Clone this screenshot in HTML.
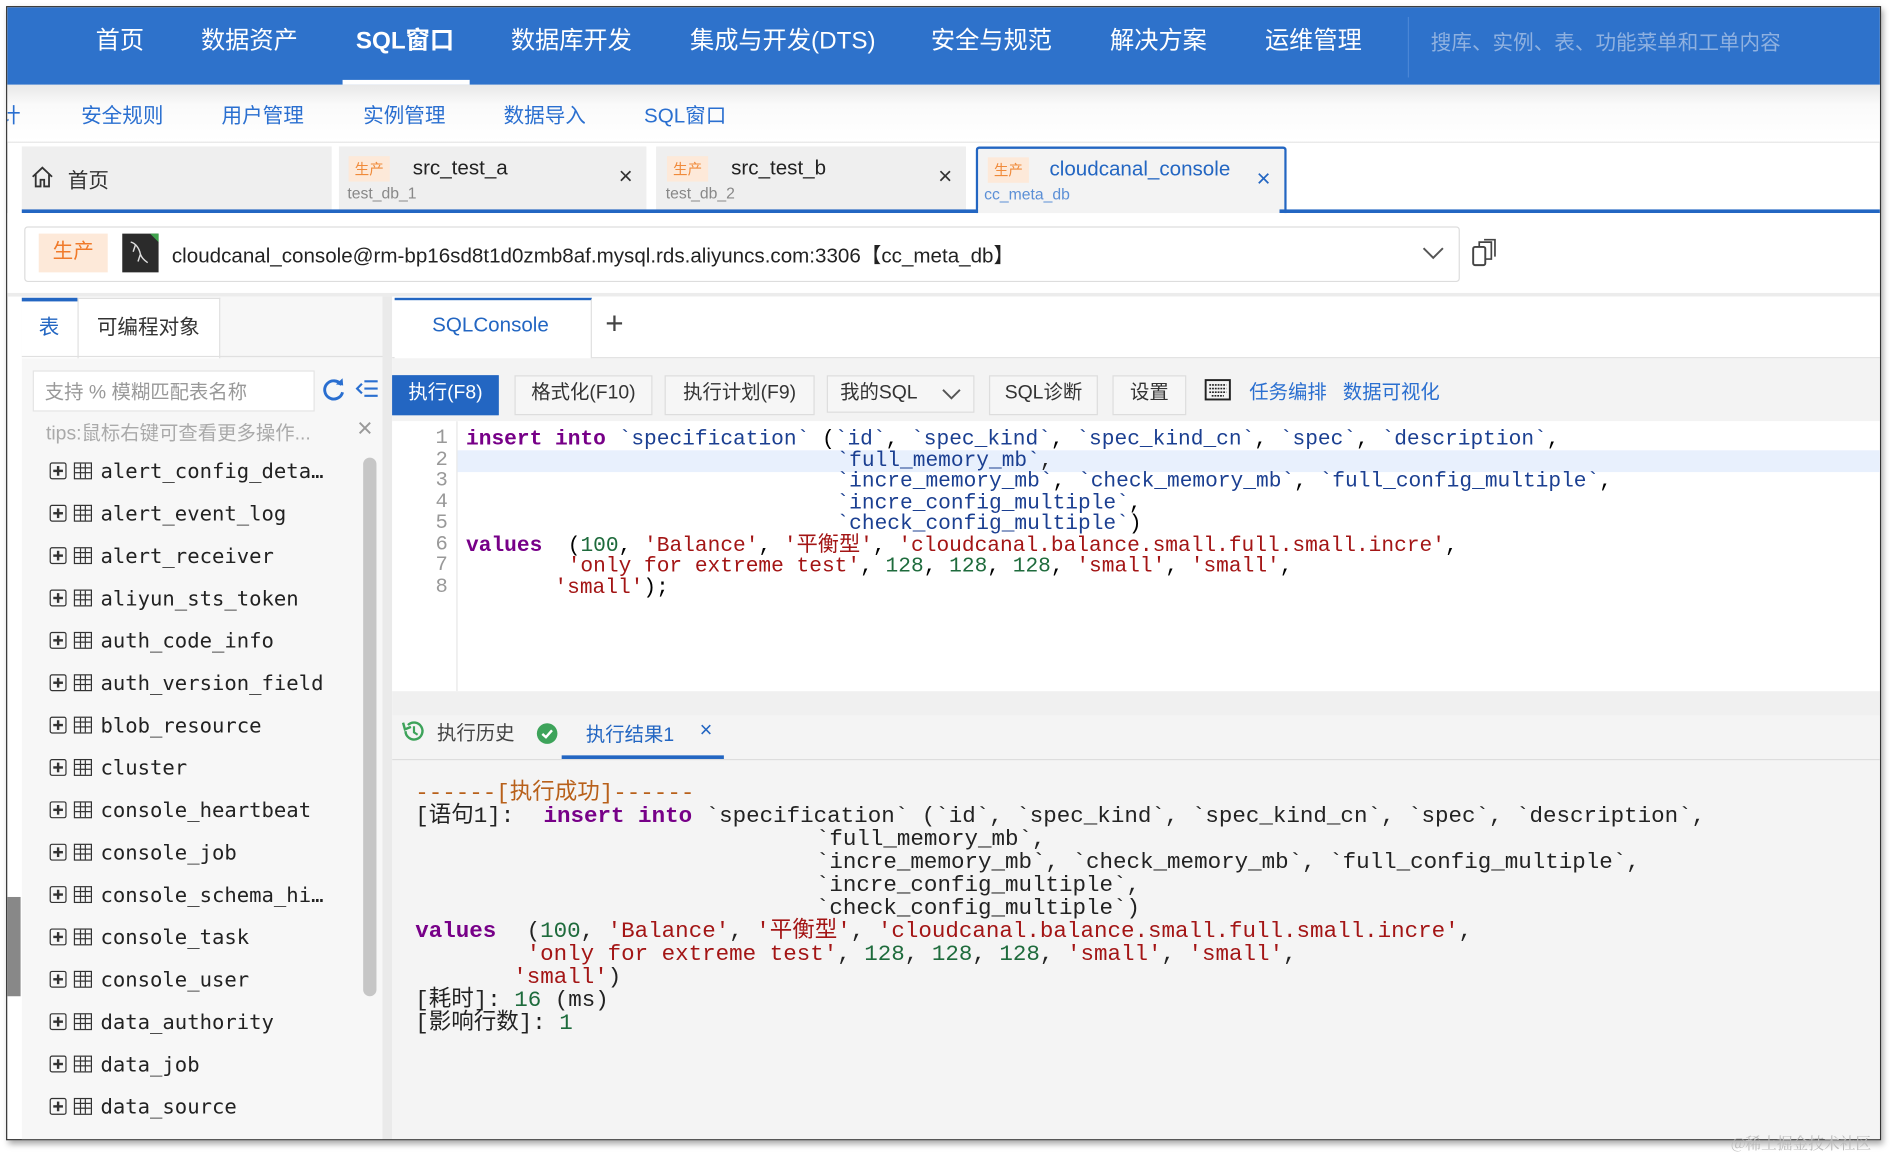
<!DOCTYPE html>
<html><head><meta charset="utf-8">
<style>
html,body{margin:0;padding:0;background:#fff;overflow:hidden;width:1898px;height:1158px}
#s{position:absolute;left:0;top:0;width:1568px;height:957px;transform:scale(1.2105);transform-origin:0 0;font-family:"Liberation Sans","Noto Sans CJK SC",sans-serif;}
.a{position:absolute;white-space:nowrap}
#app{position:absolute;left:5px;top:5px;width:1547px;height:935px;background:#fff;border:1.5px solid #333;box-shadow:2px 3px 5px rgba(0,0,0,.35);overflow:hidden}
.nav{color:#fff;font-size:20px}
.sub{color:#2a6fd0;font-size:17px}
.tab{position:absolute;top:120px;height:53px;background:#efefef}
.tag{position:absolute;background:#fde9d9;color:#f08a3a;font-size:12px;padding:2px 5px}
.code{font-family:"Liberation Mono","DejaVu Sans Mono","Noto Sans CJK SC",monospace}
.k{color:#770088;font-weight:bold}.b{color:#1b3f91}.st{color:#a31515}.n{color:#1e6b3c}
.btn{position:absolute;top:304px;height:31px;border:1px solid #ddd;background:#f6f6f6;font-size:16px;color:#333;text-align:center;line-height:27px}
.tr{position:absolute;left:35px;font-family:"DejaVu Sans Mono","Liberation Mono",monospace;font-size:17px;color:#222;height:20px;line-height:20px}
.pb{display:inline-block;width:12px;height:12px;border:1.3px solid #333;border-radius:2px;position:relative;vertical-align:-1px;margin-right:6px}
.pb:before{content:"";position:absolute;left:2px;top:5.3px;width:8px;height:1.4px;background:#333}
.pb:after{content:"";position:absolute;left:5.3px;top:2px;width:1.4px;height:8px;background:#333}
.tb{display:inline-block;width:13px;height:12px;border:1.3px solid #333;vertical-align:-1px;margin-right:7px;background:linear-gradient(#333,#333) 0 3px/100% 1.2px no-repeat,linear-gradient(#333,#333) 0 7px/100% 1.2px no-repeat,linear-gradient(#333,#333) 4px 0/1.2px 100% no-repeat,linear-gradient(#333,#333) 8px 0/1.2px 100% no-repeat}
.ln{position:absolute;left:330px;width:34px;text-align:right;color:#999;font-family:"Liberation Mono",monospace;font-size:17px}
.el{position:absolute;font-size:17.5px;line-height:18px}
.rl{position:absolute;font-size:18.6px;line-height:19px;color:#222}
</style></head><body>
<div id="s">
<div id="app">
 <div class="a" style="left:0;top:0;width:1547px;height:64px;background:#2e72cb"></div>
 <div class="a" style="left:1157px;top:8px;width:1px;height:50px;background:#4a86d6"></div>
 <div class="a nav" style="left:73px;top:11px">首页</div>
 <div class="a nav" style="left:160px;top:11px">数据资产</div>
 <div class="a nav" style="left:288px;top:11px;font-weight:bold">SQL窗口</div>
 <div class="a" style="left:277px;top:60px;width:105px;height:4px;background:#fff"></div>
 <div class="a nav" style="left:416px;top:11px">数据库开发</div>
 <div class="a nav" style="left:564px;top:11px">集成与开发(DTS)</div>
 <div class="a nav" style="left:763px;top:11px">安全与规范</div>
 <div class="a nav" style="left:911px;top:11px">解决方案</div>
 <div class="a nav" style="left:1039px;top:11px">运维管理</div>
 <div class="a" style="left:1176px;top:15px;font-size:17px;color:#8fb1e0">搜库、实例、表、功能菜单和工单内容</div>
 <div class="a" style="left:0;top:64px;width:1547px;height:47px;background:linear-gradient(#e8e8e8,#fafafa 35%,#fff)"></div>
 <div class="a" style="left:0;top:111px;width:1547px;height:1px;background:#e6e6e6"></div>
 <div class="a sub" style="left:-6px;top:75px">计</div>
 <div class="a sub" style="left:61px;top:75px">安全规则</div>
 <div class="a sub" style="left:177px;top:75px">用户管理</div>
 <div class="a sub" style="left:294px;top:75px">实例管理</div>
 <div class="a sub" style="left:410px;top:75px">数据导入</div>
 <div class="a sub" style="left:526px;top:75px">SQL窗口</div>
 <div class="tab" style="left:12px;top:115px;width:256px"></div>
 <svg class="a" style="left:19px;top:130px" width="20" height="20" viewBox="0 0 20 20"><path d="M2 10 L10 2.5 L18 10 M4.5 8 V18 H8.5 V12.5 H11.5 V18 H15.5 V8" fill="none" stroke="#333" stroke-width="1.5"/></svg>
 <div class="a" style="left:50px;top:129px;font-size:17px;color:#333">首页</div>
 <div class="tab" style="left:274px;top:115px;width:254px"></div>
 <div class="tag" style="left:282px;top:123px">生产</div>
 <div class="a" style="left:335px;top:123px;font-size:17px;color:#222">src_test_a</div>
 <div class="a" style="left:281px;top:146px;font-size:13px;color:#888">test_db_1</div>
 <div class="a" style="left:505px;top:129px;font-size:20px;color:#333">×</div>
 <div class="tab" style="left:536px;top:115px;width:256px"></div>
 <div class="tag" style="left:545px;top:123px">生产</div>
 <div class="a" style="left:598px;top:123px;font-size:17px;color:#222">src_test_b</div>
 <div class="a" style="left:544px;top:146px;font-size:13px;color:#888">test_db_2</div>
 <div class="a" style="left:769px;top:129px;font-size:20px;color:#333">×</div>
 <div class="a" style="left:800px;top:115px;width:253px;height:55px;background:#f3f3f3;border:2px solid #2366c2;border-bottom:none;border-radius:3px 3px 0 0"></div>
 <div class="tag" style="left:810px;top:124px">生产</div>
 <div class="a" style="left:861px;top:124px;font-size:17px;color:#2366c2">cloudcanal_console</div>
 <div class="a" style="left:807px;top:147px;font-size:13px;color:#5b8fd6">cc_meta_db</div>
 <div class="a" style="left:1032px;top:131px;font-size:20px;color:#2366c2">×</div>
 <div class="a" style="left:12px;top:167px;width:1535px;height:3px;background:#2366c2"></div>
 <div class="a" style="left:802px;top:166px;width:249px;height:5px;background:#f3f3f3"></div>
 <div class="a" style="left:0;top:170px;width:1547px;height:66px;background:#fff"></div>
 <div class="a" style="left:14px;top:181px;width:1184px;height:44px;border:1px solid #ddd;border-radius:3px;background:#fff"></div>
 <div class="a" style="left:26px;top:187px;width:57px;height:32px;background:#fde9d9;color:#f07a2a;font-size:17px;text-align:center;line-height:30px">生产</div>
 <div class="a" style="left:95px;top:187px;width:30px;height:32px;background:#2b2b2b"></div>
 <div class="a" style="left:118px;top:187px;width:0;height:0;border-top:7px solid #3fa34d;border-left:7px solid transparent"></div>
 <svg class="a" style="left:98px;top:190px" width="24" height="26" viewBox="0 0 24 26"><path d="M4 4 C8 5 11 9 12 14 C13 17 15 19 18 21 M8 6 L6 12 M12 14 L10 20" fill="none" stroke="#ddd" stroke-width="1.2"/></svg>
 <div class="a" style="left:136px;top:191px;font-size:17px;color:#222">cloudcanal_console@rm-bp16sd8t1d0zmb8af.mysql.rds.aliyuncs.com:3306【cc_meta_db】</div>
 <svg class="a" style="left:1168px;top:196px" width="20" height="14" viewBox="0 0 20 14"><path d="M2 3 L10 11 L18 3" fill="none" stroke="#555" stroke-width="1.6"/></svg>
 <svg class="a" style="left:1208px;top:189px" width="26" height="26" viewBox="0 0 26 26"><rect x="3" y="9" width="10" height="15" rx="1.5" fill="none" stroke="#444" stroke-width="1.6"/><path d="M8 9 V5 H18 V19 H13 M12 3 H21 V17" fill="none" stroke="#444" stroke-width="1.4"/></svg>
 <div class="a" style="left:0;top:236px;width:1547px;height:3px;background:#ececec"></div>
 <div class="a" style="left:12px;top:239px;width:298px;height:700px;background:#f7f7f7"></div>
 <div class="a" style="left:310px;top:239px;width:8px;height:700px;background:#eaeaea"></div>
 <div class="a" style="left:12px;top:240px;width:46px;height:47px;background:#fff;border-top:3px solid #2366c2"></div>
 <div class="a" style="left:26px;top:250px;font-size:17px;color:#2366c2">表</div>
 <div class="a" style="left:58px;top:240px;width:116px;height:49px;background:#fff;border:1px solid #e0e0e0;border-bottom:none"></div>
 <div class="a" style="left:74px;top:250px;font-size:17px;color:#333">可编程对象</div>
 <div class="a" style="left:12px;top:288px;width:298px;height:1px;background:#e0e0e0"></div>
 <div class="a" style="left:21px;top:300px;width:231px;height:32px;background:#fff;border:1px solid #e4e4e4"></div>
 <div class="a" style="left:31px;top:304px;font-size:16px;color:#999">支持 % 模糊匹配表名称</div>
 <svg class="a" style="left:259px;top:305px" width="22" height="22" viewBox="0 0 22 22"><path d="M17 7 A7.5 7.5 0 1 0 18 13" fill="none" stroke="#2a6fd0" stroke-width="2.4"/><path d="M12.5 6.5 L18.5 7.5 L18 1.5 Z" fill="#2a6fd0"/></svg>
 <svg class="a" style="left:287px;top:306px" width="20" height="18" viewBox="0 0 20 18"><path d="M8 3 H19 M8 9 H19 M8 15 H19 M6 5 L2 9 L6 13" fill="none" stroke="#2a6fd0" stroke-width="1.8"/></svg>
 <div class="a" style="left:32px;top:338px;font-size:16px;color:#aaa">tips:鼠标右键可查看更多操作...</div>
 <div class="a" style="left:289px;top:335px;font-size:22px;color:#999">×</div>
 <div class="a" style="left:294px;top:372px;width:11px;height:445px;background:#c6c6c6;border-radius:6px"></div>
 <div class="a" style="left:0;top:735px;width:11px;height:82px;background:#888"></div>

 <div class="tr" style="top:374px"><span class="pb"></span><span class="tb"></span>alert_config_deta…</div>
 <div class="tr" style="top:409px"><span class="pb"></span><span class="tb"></span>alert_event_log</div>
 <div class="tr" style="top:444px"><span class="pb"></span><span class="tb"></span>alert_receiver</div>
 <div class="tr" style="top:479px"><span class="pb"></span><span class="tb"></span>aliyun_sts_token</div>
 <div class="tr" style="top:514px"><span class="pb"></span><span class="tb"></span>auth_code_info</div>
 <div class="tr" style="top:549px"><span class="pb"></span><span class="tb"></span>auth_version_field</div>
 <div class="tr" style="top:584px"><span class="pb"></span><span class="tb"></span>blob_resource</div>
 <div class="tr" style="top:619px"><span class="pb"></span><span class="tb"></span>cluster</div>
 <div class="tr" style="top:654px"><span class="pb"></span><span class="tb"></span>console_heartbeat</div>
 <div class="tr" style="top:689px"><span class="pb"></span><span class="tb"></span>console_job</div>
 <div class="tr" style="top:724px"><span class="pb"></span><span class="tb"></span>console_schema_hi…</div>
 <div class="tr" style="top:759px"><span class="pb"></span><span class="tb"></span>console_task</div>
 <div class="tr" style="top:794px"><span class="pb"></span><span class="tb"></span>console_user</div>
 <div class="tr" style="top:829px"><span class="pb"></span><span class="tb"></span>data_authority</div>
 <div class="tr" style="top:864px"><span class="pb"></span><span class="tb"></span>data_job</div>
 <div class="tr" style="top:899px"><span class="pb"></span><span class="tb"></span>data_source</div>

 <div class="a" style="left:318px;top:239px;width:1229px;height:50px;background:#fff"></div>
 <div class="a" style="left:318px;top:289px;width:1229px;height:1px;background:#e0e0e0"></div>
 <div class="a" style="left:320px;top:240px;width:162px;height:50px;background:#fff;border-top:2px solid #2366c2;border-right:1px solid #e0e0e0"></div>
 <div class="a" style="left:351px;top:253px;font-size:17px;color:#2366c2">SQLConsole</div>
 <div class="a" style="left:494px;top:246px;font-size:26px;color:#444;font-weight:300">+</div>
 <div class="a" style="left:318px;top:290px;width:1229px;height:52px;background:#f3f3f3"></div>
 <div class="btn" style="left:318px;width:86px;background:#2366c2;border-color:#2366c2;color:#fff">执行(F8)</div>
 <div class="btn" style="left:419px;width:112px">格式化(F10)</div>
 <div class="btn" style="left:543px;width:122px">执行计划(F9)</div>
 <div class="btn" style="left:677px;width:122px;text-align:left;padding-left:10px;box-sizing:border-box">我的SQL<svg style="position:absolute;right:10px;top:9px" width="16" height="12" viewBox="0 0 16 12"><path d="M1 2 L8 9 L15 2" fill="none" stroke="#555" stroke-width="1.6"/></svg></div>
 <div class="btn" style="left:811px;width:88px">SQL诊断</div>
 <div class="btn" style="left:913px;width:59px">设置</div>
 <svg class="a" style="left:989px;top:307px" width="22" height="18" viewBox="0 0 22 18"><rect x="1" y="1" width="20" height="16" fill="none" stroke="#222" stroke-width="1.6"/><path d="M4 5 H18 M4 8 H18 M4 11 H18 M6 14 H16" stroke="#222" stroke-width="1.4" stroke-dasharray="1.5 0.8"/></svg>
 <div class="a" style="left:1026px;top:304px;font-size:16px;color:#2a6fd0">任务编排&nbsp;&nbsp;&nbsp;数据可视化</div>
 <div class="a" style="left:318px;top:342px;width:1229px;height:223px;background:#fff"></div>
 <div class="a" style="left:371px;top:342px;width:1px;height:223px;background:#e6e6e6"></div>
 <div class="a" style="left:372px;top:366px;width:1175px;height:18px;background:#e8f0fd"></div>
 <div class="ln" style="top:348px;line-height:17.5px;white-space:pre">1
2
3
4
5
6
7
8</div>
 <div class="a code el" style="left:379px;top:348px"><span class="k">insert into</span> <span class="b">`specification`</span> (<span class="b">`id`</span>, <span class="b">`spec_kind`</span>, <span class="b">`spec_kind_cn`</span>, <span class="b">`spec`</span>, <span class="b">`description`</span>,</div>
 <div class="a code el b" style="left:685px;top:365.5px">`full_memory_mb`<span style="color:#222">,</span></div>
 <div class="a code el" style="left:685px;top:383px"><span class="b">`incre_memory_mb`</span>, <span class="b">`check_memory_mb`</span>, <span class="b">`full_config_multiple`</span>,</div>
 <div class="a code el" style="left:685px;top:400.5px"><span class="b">`incre_config_multiple`</span>,</div>
 <div class="a code el" style="left:685px;top:418px"><span class="b">`check_config_multiple`</span>)</div>
 <div class="a code el" style="left:379px;top:435.5px"><span class="k">values</span></div>
 <div class="a code el" style="left:463px;top:435.5px">(<span class="n">100</span>, <span class="st">'Balance'</span>, <span class="st">'平衡型'</span>, <span class="st">'cloudcanal.balance.small.full.small.incre'</span>,</div>
 <div class="a code el" style="left:463px;top:453px"><span class="st">'only for extreme test'</span>, <span class="n">128</span>, <span class="n">128</span>, <span class="n">128</span>, <span class="st">'small'</span>, <span class="st">'small'</span>,</div>
 <div class="a code el" style="left:452px;top:470.5px"><span class="st">'small'</span>);</div>
 <div class="a" style="left:318px;top:565px;width:1229px;height:20px;background:#f0f0f0"></div>
 <div class="a" style="left:318px;top:585px;width:1229px;height:355px;background:#f4f4f4"></div>
 <div class="a" style="left:318px;top:621px;width:1229px;height:1px;background:#ddd"></div>
 <svg class="a" style="left:325px;top:588px" width="20" height="20" viewBox="0 0 20 20"><path d="M4 10 A7 7 0 1 0 6 5" fill="none" stroke="#3da35a" stroke-width="2"/><path d="M2 3 L3.5 8.5 L8.5 6.5" fill="none" stroke="#3da35a" stroke-width="2"/><path d="M11 6 V11 L14 13" fill="none" stroke="#3da35a" stroke-width="1.8"/></svg>
 <div class="a" style="left:355px;top:586px;font-size:16px;color:#444">执行历史</div>
 <svg class="a" style="left:437px;top:591px" width="18" height="18" viewBox="0 0 18 18"><circle cx="9" cy="9" r="8.5" fill="#3da35a"/><path d="M5 9.3 L8 12 L13 6.3" fill="none" stroke="#fff" stroke-width="2"/></svg>
 <div class="a" style="left:478px;top:587px;font-size:16px;color:#2366c2">执行结果1</div>
 <div class="a" style="left:572px;top:587px;font-size:18px;color:#2366c2">×</div>
 <div class="a" style="left:458px;top:618px;width:134px;height:3px;background:#2366c2"></div>

 <div class="a code rl" style="left:337px;top:640px;color:#b8601a">------[执行成功]------</div>
 <div class="a code rl" style="left:337px;top:659px">[语句1]:</div>
 <div class="a code rl" style="left:443px;top:659px"><span class="k">insert into</span> `specification` (`id`, `spec_kind`, `spec_kind_cn`, `spec`, `description`,</div>
 <div class="a code rl" style="left:668px;top:678px">`full_memory_mb`,</div>
 <div class="a code rl" style="left:668px;top:697px">`incre_memory_mb`, `check_memory_mb`, `full_config_multiple`,</div>
 <div class="a code rl" style="left:668px;top:716px">`incre_config_multiple`,</div>
 <div class="a code rl" style="left:668px;top:735px">`check_config_multiple`)</div>
 <div class="a code rl" style="left:337px;top:754px"><span class="k">values</span></div>
 <div class="a code rl" style="left:429px;top:754px">(<span class="n">100</span>, <span class="st">'Balance'</span>, <span class="st">'平衡型'</span>, <span class="st">'cloudcanal.balance.small.full.small.incre'</span>,</div>
 <div class="a code rl" style="left:429px;top:773px"><span class="st">'only for extreme test'</span>, <span class="n">128</span>, <span class="n">128</span>, <span class="n">128</span>, <span class="st">'small'</span>, <span class="st">'small'</span>,</div>
 <div class="a code rl" style="left:418px;top:792px"><span class="st">'small'</span>)</div>
 <div class="a code rl" style="left:337px;top:811px">[耗时]: <span class="n">16</span> (ms)</div>
 <div class="a code rl" style="left:337px;top:830px">[影响行数]: <span class="n">1</span></div>
</div>
<div class="a" style="left:1430px;top:934px;font-size:13px;color:#bbb;font-family:'Noto Serif CJK SC',serif">@稀土掘金技术社区</div>
</div>
</body></html>
